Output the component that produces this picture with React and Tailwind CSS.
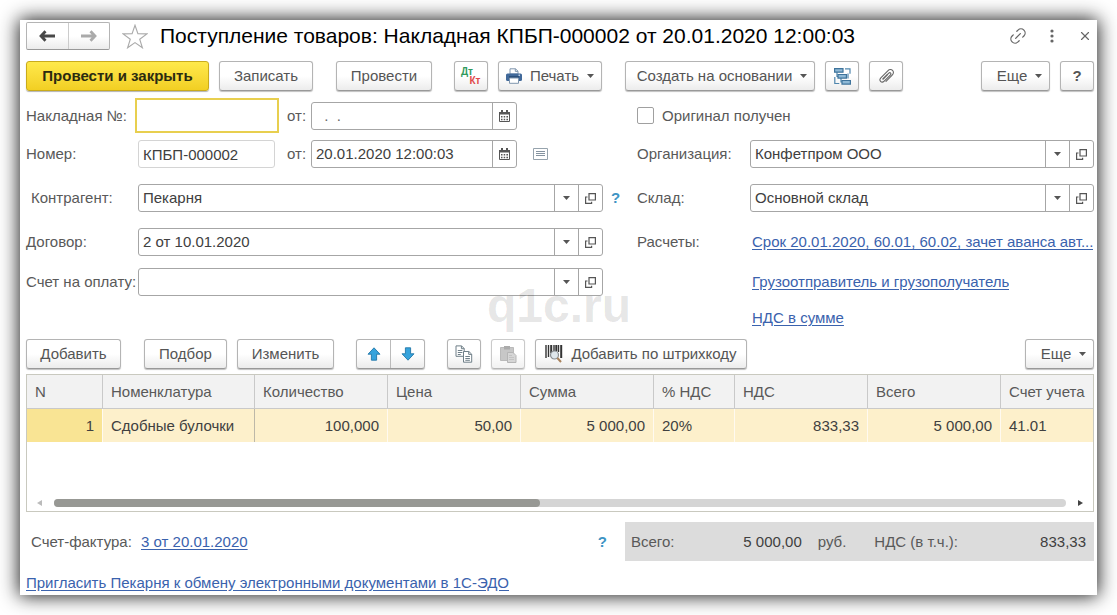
import { useState } from "react";
import { Link2, X } from "lucide-react";

const COLUMNS = [
  { name: "N", width: "w-[75px]", value: "1", right: true },
  { name: "Номенклатура", width: "w-[152px]", value: "Сдобные булочки" },
  { name: "Количество", width: "w-[133px]", value: "100,000", right: true },
  { name: "Цена", width: "w-[133px]", value: "50,00", right: true },
  { name: "Сумма", width: "w-[133px]", value: "5 000,00", right: true },
  { name: "% НДС", width: "w-[81px]", value: "20%" },
  { name: "НДС", width: "w-[133px]", value: "833,33", right: true },
  { name: "Всего", width: "w-[133px]", value: "5 000,00", right: true },
  { name: "Счет учета", width: "w-[93px]", value: "41.01" },
];

const BTN = "flex h-[30px] shrink-0 items-center justify-center rounded-[3px] border border-[#b4b4b4] border-b-[#999] bg-gradient-to-b from-white from-50% to-[#ececec] text-[#555] shadow-[0_1px_1px_rgba(0,0,0,0.25)]";

/* Icons */
function Caret({ className = "" }) {
  return <svg className={`shrink-0 ${className}`} width="7" height="4" viewBox="0 0 7 4" fill="#555"><path d="M0 0h7L3.5 4z"/></svg>;
}

function ArrowIcon({ color, flip }) {
  return (
    <svg width="16" height="12" viewBox="0 0 16 12" fill="none" stroke={color} strokeWidth="2.8" className={flip ? "rotate-180" : ""}>
      <path d="M2 6h14M6.5 1.2L2 6l4.5 4.8"/>
    </svg>
  );
}

function StarIcon() {
  return (
    <svg width="26" height="25" viewBox="0 0 26 25" fill="#fff" stroke="#aaa" strokeWidth="1.1">
      <path d="M13 1.2l2.9 8.5 9 .2-7.2 5.3 2.7 8.6-7.4-5.2-7.4 5.2 2.7-8.6L1.1 9.9l9-.2z"/>
    </svg>
  );
}

function CalendarIcon() {
  return (
    <svg width="11" height="12" viewBox="0 0 11 12">
      <path d="M.5 2.5h10v9H.5z" fill="#fff" stroke="#555"/>
      <path d="M0 2h11v2.5H0zM2 0h2v2H2zM7 0h2v2H7z" fill="#555"/>
      <path d="M2 6h1.5v1.5H2zM4.7 6h1.5v1.5H4.7zM7.4 6H9v1.5H7.4zM2 8.7h1.5v1.5H2zM4.7 8.7h1.5v1.5H4.7zM7.4 8.7H9v1.5H7.4z" fill="#555"/>
    </svg>
  );
}

function OpenIcon() {
  return (
    <svg width="11" height="11" viewBox="0 0 11 11" fill="none" stroke="#555" strokeWidth="1.2">
      <path d="M4 .6h6.4V7H4z"/>
      <path d="M2.5 4H.6v6.4h6V8.8"/>
    </svg>
  );
}

function PrinterIcon() {
  return (
    <svg width="16" height="16" viewBox="0 0 16 16">
      <path d="M4 6V.8h5.5L12 3.2V6z" fill="#fff" stroke="#7f95ad"/>
      <path d="M9.3.8v2.6H12" fill="none" stroke="#7f95ad"/>
      <rect x="0" y="5.5" width="16" height="7.5" rx="1.5" fill="#41699a"/>
      <path d="M3 9h10" stroke="#22456f" strokeWidth="1.4"/>
      <path d="M3.5 10h9v5.3h-9z" fill="#fff" stroke="#7f95ad"/>
      <path d="M12.5 7.2h1.5" stroke="#fff"/>
    </svg>
  );
}

function StructureIcon() {
  return (
    <svg width="17" height="17" viewBox="0 0 17 17">
      <path d="M11 .8h5v5M.8 9v6.5h4.5M3 4v4.5h2M7 10v4h2" fill="none" stroke="#4f86ad" strokeWidth="1.2"/>
      <path d="M.6.6H9v3.6H.6zM4 6.5h8.4v3.6H4zM8 12.5h8.4v3.6H8z" fill="#8fb9d6" stroke="#3f749c" strokeWidth="1.2"/>
      <path d="M14 5.5v5" stroke="#4f86ad" strokeWidth="1.2"/>
    </svg>
  );
}

function ClipIcon() {
  return (
    <svg width="16" height="16" viewBox="0 0 16 16" fill="none" stroke="#666" strokeWidth="1.1" strokeLinecap="round">
      <path d="M5 11l5.800-5.800c1.300-1.300 3 .4 1.700 1.700L6.200 13.200c-2.600 2.600-6-.8-3.400-3.400l7-7c3.400-3.400 7.800 1 4.400 4.400l-6.200 6.200"/>
      <path d="M5 11l4.500-4.500"/>
    </svg>
  );
}

function BigArrow({ down }) {
  return (
    <svg width="14" height="14" viewBox="0 0 14 14" fill="#36a3dc" stroke="#2377a8" strokeWidth=".9" strokeLinejoin="round" className={down ? "rotate-180" : ""}>
      <path d="M7 .8l6 6.4H9.6v6H4.4v-6H1z"/>
    </svg>
  );
}

function CopyIcon() {
  return (
    <svg width="18" height="18" viewBox="0 0 18 18" fill="#fff" stroke="#6f7f88">
      <path d="M1 .9h5.6l2.6 2.6v7.8H1z"/>
      <path d="M6.4.9v2.8h2.8M2.8 5.5h4.6M2.8 7.5h4.6M2.8 9.5h3" fill="none"/>
      <path d="M8.5 6.5h5.4l2.8 2.7v8H8.5z"/>
      <path d="M13.7 6.5v2.9h3M10.3 11.5h4.6M10.3 13.5h4.6M10.3 15.3h4.6" fill="none"/>
    </svg>
  );
}

function PasteIcon() {
  return (
    <svg width="17" height="18" viewBox="0 0 17 18">
      <path d="M.5 2.5h13v13H.5z" fill="#b0b0b0" stroke="#9d9d9d"/>
      <path d="M4 1h6v3.5H4z" fill="#888"/>
      <path d="M7.5 7.5H13l3 3v7H7.5z" fill="#c6c6c6" stroke="#979797"/>
      <path d="M9 10.5h3M9 12.5h5M9 14.5h5" stroke="#aaa"/>
    </svg>
  );
}

function BarcodeIcon() {
  return (
    <svg width="18" height="18" viewBox="0 0 18 18">
      <path d="M1 0v13M3.5 0v12M9 0v6M13.5 0v7" stroke="#333" strokeWidth="1.4"/>
      <path d="M6.2 0v8M11.3 0v6M16.2 0v13" stroke="#333" strokeWidth="2"/>
      <circle cx="9.5" cy="10" r="4" fill="#dfe7ec" stroke="#8a8f93" strokeWidth="1.2"/>
      <path d="M12.4 13l3.6 4" stroke="#a8825c" strokeWidth="2"/>
    </svg>
  );
}

function ListIcon() {
  return (
    <svg width="15" height="12" viewBox="0 0 15 12" fill="#fff" stroke="#96a3ad">
      <path d="M.5.5h14v11H.5z"/>
      <path d="M3 3.5h9M3 5.5h9M3 7.5h9" stroke="#8593a0"/>
    </svg>
  );
}

/* Form parts */
function Side({ label, children }) {
  return (
    <button type="button" aria-label={label} className="flex w-6 shrink-0 items-center justify-center border-l border-[#a6a6a6]">
      {children}
    </button>
  );
}

function Combo({ id, value }) {
  const [text, setText] = useState(value);
  return (
    <div className="flex h-7 min-w-0 flex-1 rounded-[3px] border border-[#a6a6a6] bg-white">
      <input id={id} value={text} onChange={(e) => setText(e.target.value)} className="min-w-0 flex-1 px-1 text-[#404040] outline-none"/>
      <Side label="Выбрать"><Caret/></Side>
      <Side label="Открыть"><OpenIcon/></Side>
    </div>
  );
}

function DateField({ id, value, placeholder }) {
  const [text, setText] = useState(value);
  return (
    <div className="flex h-7 w-[206px] rounded-[3px] border border-[#a6a6a6] bg-white">
      <input id={id} value={text} placeholder={placeholder} onChange={(e) => setText(e.target.value)} className="min-w-0 flex-1 px-1 text-[#404040] outline-none placeholder:text-[#666]"/>
      <Side label="Календарь"><CalendarIcon/></Side>
    </div>
  );
}

function Row({ className = "", children }) {
  return <div className={`grid min-h-7 grid-cols-[611fr_457fr] items-center ${className}`}>{children}</div>;
}

function Label({ htmlFor, className, children }) {
  return <label htmlFor={htmlFor} className={`shrink-0 whitespace-nowrap ${className}`}>{children}</label>;
}

function Anchor({ children }) {
  return <a href="#" className="truncate text-[#3a62ad] underline underline-offset-2">{children}</a>;
}

export default function App() {
  const [original, setOriginal] = useState(false);

  return (
    <div className="min-h-screen bg-white p-5 font-['Liberation_Sans',Arial,sans-serif] text-[15px] leading-5 text-[#595959]">
      <main className="relative bg-white pt-0.5 pr-[3px] pb-0.5 pl-1.5 shadow-[0_0_18px_1px_rgba(0,0,0,0.9)]">
        {/* Title */}
        <header className="flex h-7 items-center">
          <div className="flex h-7 w-[84px] rounded-[2px] border border-[#b4b4b4] border-b-[#999] bg-gradient-to-b from-white from-50% to-[#ececec]">
            <button type="button" aria-label="Назад" className="flex flex-1 items-center justify-center border-r border-[#ccc]"><ArrowIcon color="#484848"/></button>
            <button type="button" aria-label="Вперед" className="flex flex-1 items-center justify-center"><ArrowIcon color="#aaa" flip/></button>
          </div>
          <button type="button" aria-label="В избранное" className="ml-3"><StarIcon/></button>
          <h1 className="ml-3 flex-1 truncate text-[21px] leading-7 text-black">Поступление товаров: Накладная КПБП-000002 от 20.01.2020 12:00:03</h1>
          <button type="button" aria-label="Ссылка"><Link2 size={20} strokeWidth={1.5} className="-rotate-45 text-[#666]"/></button>
          <button type="button" aria-label="Меню" className="ml-[18px] flex w-3 justify-center">
            <svg width="4" height="14" viewBox="0 0 4 14" fill="#666"><circle cx="2" cy="2" r="1.6"/><circle cx="2" cy="7" r="1.6"/><circle cx="2" cy="12" r="1.6"/></svg>
          </button>
          <button type="button" aria-label="Закрыть" className="mr-0.5 ml-5"><X size={14} strokeWidth={2} className="text-[#666]"/></button>
        </header>

        {/* Command bar */}
        <div className="mt-[11px] flex">
          <button type="button" className="h-[30px] w-[183px] rounded-[3px] border border-[#c9ab1c] bg-gradient-to-b from-[#ffe94a] to-[#f2cf22] font-bold text-[#2b2b10] shadow-[0_1px_1px_rgba(0,0,0,0.3)]">Провести и закрыть</button>
          <button type="button" className={`${BTN} ml-2.5 w-[94px]`}>Записать</button>
          <button type="button" className={`${BTN} ml-[23px] w-24`}>Провести</button>
          <button type="button" className={`${BTN} ml-[22px] w-[34px]`}>
            <span className="flex flex-col text-[10px] leading-[9px] font-bold">
              <span className="pr-2 text-[#2f9a5d]">Дт</span>
              <span className="pl-2 text-[#e04b4b]">Кт</span>
            </span>
          </button>
          <button type="button" className={`${BTN} ml-2.5 w-[104px]`}><PrinterIcon/><span className="mr-2 ml-2">Печать</span><Caret/></button>
          <button type="button" className={`${BTN} ml-[23px] w-[190px]`}><span className="mr-2 ml-1">Создать на основании</span><Caret/></button>
          <button type="button" aria-label="Структура" className={`${BTN} ml-2.5 w-[34px]`}><StructureIcon/></button>
          <button type="button" aria-label="Файлы" className={`${BTN} ml-2.5 w-[34px]`}><ClipIcon/></button>
          <button type="button" className={`${BTN} ml-auto w-[69px]`}><span className="mr-2 ml-2">Еще</span><Caret/></button>
          <button type="button" className={`${BTN} ml-2.5 w-[34px] font-bold text-[#333]`}>?</button>
        </div>

        {/* Document fields */}
        <Row className="mt-[7px]">
          <div className="flex items-center">
            <Label htmlFor="doc" className="w-[109px]">Накладная №:</Label>
            <input id="doc" className="h-[35px] w-36 border-2 border-[#e8cf4f] px-1 outline-none"/>
            <Label htmlFor="docDate" className="ml-2 w-6">от:</Label>
            <DateField id="docDate" value="" placeholder="  .  ."/>
          </div>
          <label className="flex items-center gap-2">
            <input type="checkbox" checked={original} onChange={(e) => setOriginal(e.target.checked)} className="h-[17px] w-[17px] appearance-none rounded-[2px] border border-[#a0a0a0] bg-white checked:bg-[#888]"/>
            Оригинал получен
          </label>
        </Row>
        <Row className="mt-[7px]">
          <div className="flex items-center">
            <Label htmlFor="num" className="w-28">Номер:</Label>
            <input id="num" readOnly value="КПБП-000002" className="h-7 w-[137px] rounded-[3px] border border-[#d4d4d4] px-1 text-[#404040] outline-none"/>
            <Label htmlFor="numDate" className="ml-3 w-6">от:</Label>
            <DateField id="numDate" value="20.01.2020 12:00:03"/>
            <button type="button" aria-label="История" className="ml-4"><ListIcon/></button>
          </div>
          <div className="flex items-center">
            <Label htmlFor="org" className="w-[113px]">Организация:</Label>
            <Combo id="org" value="Конфетпром ООО"/>
          </div>
        </Row>
        <Row className="mt-4">
          <div className="flex items-center">
            <Label htmlFor="partner" className="w-28 pl-[5px]">Контрагент:</Label>
            <Combo id="partner" value="Пекарня"/>
            <button type="button" className="w-[34px] pl-2 text-left font-bold text-[#3d94c4]">?</button>
          </div>
          <div className="flex items-center">
            <Label htmlFor="store" className="w-[113px]">Склад:</Label>
            <Combo id="store" value="Основной склад"/>
          </div>
        </Row>
        <Row className="mt-4">
          <div className="flex items-center pr-[34px]">
            <Label htmlFor="contract" className="w-28">Договор:</Label>
            <Combo id="contract" value="2 от 10.01.2020"/>
          </div>
          <div className="flex min-w-0 items-center">
            <span className="w-[115px] shrink-0">Расчеты:</span>
            <Anchor>Срок 20.01.2020, 60.01, 60.02, зачет аванса авт...</Anchor>
          </div>
        </Row>
        <Row className="mt-3">
          <div className="flex items-center pr-[34px]">
            <Label htmlFor="bill" className="w-28">Счет на оплату:</Label>
            <Combo id="bill" value=""/>
          </div>
          <div className="flex pl-[115px]"><Anchor>Грузоотправитель и грузополучатель</Anchor></div>
        </Row>
        <Row className="mt-2">
          <div/>
          <div className="flex pl-[115px]"><Anchor>НДС в сумме</Anchor></div>
        </Row>

        {/* Goods */}
        <div className="mt-[7px] flex">
          <button type="button" className={`${BTN} w-[95px]`}>Добавить</button>
          <button type="button" className={`${BTN} ml-[23px] w-[83px]`}>Подбор</button>
          <button type="button" className={`${BTN} ml-2.5 w-[97px]`}>Изменить</button>
          <div className={`${BTN} ml-[22px] w-[69px]`}>
            <button type="button" aria-label="Вверх" className="flex h-full flex-1 items-center justify-center border-r border-[#bbb]"><BigArrow/></button>
            <button type="button" aria-label="Вниз" className="flex h-full flex-1 items-center justify-center"><BigArrow down/></button>
          </div>
          <button type="button" aria-label="Копировать" className={`${BTN} ml-[22px] w-[34px]`}><CopyIcon/></button>
          <button type="button" aria-label="Вставить" disabled className={`${BTN} ml-2.5 w-[34px] opacity-70`}><PasteIcon/></button>
          <button type="button" className={`${BTN} ml-2.5 w-[212px] gap-2`}><BarcodeIcon/>Добавить по штрихкоду</button>
          <button type="button" className={`${BTN} ml-auto w-[69px]`}><span className="mr-2 ml-2">Еще</span><Caret/></button>
        </div>

        <section className="mt-[5px] border border-[#c9c9bf]">
          <table className="w-full table-fixed border-separate border-spacing-0 text-left">
            <thead>
              <tr className="h-[34px] bg-[#f2f2f2]">
                {COLUMNS.map((col) => (
                  <th key={col.name} className={`${col.width} border-b border-l border-[#c9c9c9] pl-2 font-normal whitespace-nowrap first:border-l-0`}>{col.name}</th>
                ))}
              </tr>
            </thead>
            <tbody>
              <tr className="h-[33px] bg-[#fdf0cb] text-[#404040]">
                {COLUMNS.map((col, i) => (
                  <td key={col.name} className={`px-2 ${col.right ? "text-right" : ""} ${i === 0 ? "bg-[#f9e494]" : i === 2 ? "border-l border-[#bdb8a8]" : "border-l border-[#fffaf0]"}`}>{col.value}</td>
                ))}
              </tr>
            </tbody>
          </table>
          <div className="mt-14 mb-1 flex h-[9px] items-center pr-2.5 pl-2.5">
            <svg width="5" height="6" viewBox="0 0 5 6" fill="#bbb"><path d="M5 0v6L0 3z"/></svg>
            <div className="mx-3 h-2 flex-1 rounded-full bg-[#d5d5d5]">
              <div className="h-2 w-[48%] rounded-full bg-[#979894]"/>
            </div>
            <svg width="5" height="6" viewBox="0 0 5 6" fill="#444"><path d="M0 0v6l5-3z"/></svg>
          </div>
        </section>

        {/* Totals */}
        <Row className="mt-2.5">
          <div className="flex items-center pl-[5px]">
            <span className="w-[110px]">Счет-фактура:</span>
            <Anchor>3 от 20.01.2020</Anchor>
            <button type="button" className="mr-[30px] ml-auto font-bold text-[#3d94c4]">?</button>
          </div>
          <div className="-ml-3 flex h-[39px] items-center bg-[#dcdcdc] pr-2 pl-1.5">
            <span>Всего:</span>
            <span className="ml-auto text-[#404040]">5 000,00</span>
            <span className="ml-4">руб.</span>
            <span className="ml-7">НДС (в т.ч.):</span>
            <span className="w-32 text-right text-[#404040]">833,33</span>
          </div>
        </Row>
        <div className="mt-3 flex"><Anchor>Пригласить Пекарня к обмену электронными документами в 1С-ЭДО</Anchor></div>

        <div className="pointer-events-none absolute top-[258px] left-[467px] text-[48px] leading-[56px] font-bold text-black/10">q1c.ru</div>
      </main>
    </div>
  );
}
